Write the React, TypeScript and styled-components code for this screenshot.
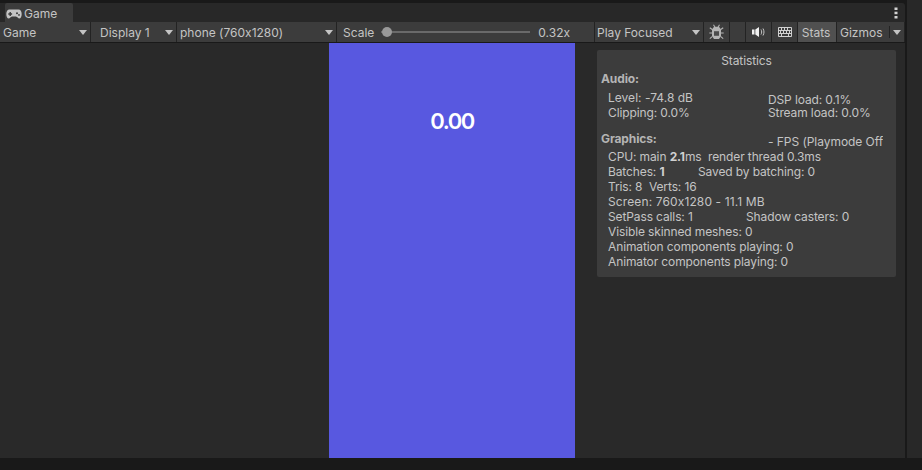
import React from "react";
import styled, { createGlobalStyle } from "styled-components";

const Global = createGlobalStyle`
  html, body { margin: 0; padding: 0; background: #191919; }
  body { width: 922px; height: 470px; overflow: hidden; font-family: Inter, "Noto Sans", sans-serif; font-feature-settings: "calt" 0; }
`;

const Page = styled.div`
  width: 922px;
  height: 470px;
  padding-bottom: 12px;
  box-sizing: border-box;
  display: flex;
  background: #191919;
  font-size: 12px;
  color: #c4c4c4;
`;

const Panel = styled.div`
  width: 905px;
  flex: none;
  padding-top: 3px;
  box-sizing: border-box;
  display: flex;
  flex-direction: column;
`;

const SideStrip = styled.div`
  flex: 1;
  margin-left: 2px;
  background: #282828;
`;

const TabStrip = styled.div`
  height: 19px;
  flex: none;
  background: #282828;
  display: flex;
  align-items: flex-end;
  justify-content: space-between;
  padding-left: 5px;
  border-radius: 0 3px 0 0;
`;

const Tab = styled.div`
  width: 68px;
  height: 19px;
  padding: 2px 0 0 1px;
  box-sizing: border-box;
  background: #3c3c3c;
  display: flex;
  align-items: center;
  gap: 2px;
  font-size: 12px;
  border-radius: 2px 2px 0 0;
`;

const MoreMenu = styled.div`
  width: 19px;
  height: 19px;
  display: flex;
  align-items: center;
  justify-content: center;
`;

const Toolbar = styled.div`
  height: 20px;
  flex: none;
  display: flex;
  background: #3c3c3c;
  border-bottom: 1px solid #191919;
  box-sizing: content-box;
`;

const Cell = styled.div<{ $w: number; $on?: boolean; $pad?: number; $left?: number }>`
  width: ${(p) => p.$w}px;
  flex: none;
  box-sizing: border-box;
  height: 20px;
  padding: 0 ${(p) => p.$pad ?? 3}px 0 ${(p) => p.$left ?? p.$pad ?? 3}px;
  display: flex;
  align-items: center;
  justify-content: space-between;
  border-right: 1px solid #232323;
  background: ${(p) => (p.$on ? "#505050" : "#3c3c3c")};
  white-space: nowrap;
`;

const IconCell = styled(Cell)<{ $nudge?: number }>`
  justify-content: center;
  padding: 0 ${(p) => p.$nudge ?? 0}px 0 0;
`;

const Caret = styled.span`
  width: 0;
  height: 0;
  flex: none;
  border-left: 4px solid transparent;
  border-right: 4px solid transparent;
  border-top: 5px solid #c4c4c4;
`;

const DisplayLabel = styled.span`
  margin-left: 6px;
`;

const Slider = styled.div`
  width: 149px;
  height: 2px;
  background: #6a6a6a;
  position: relative;
  margin-left: 5px;
`;

const Thumb = styled.span`
  position: absolute;
  left: 1px;
  top: -4px;
  width: 10px;
  height: 10px;
  border-radius: 50%;
  background: #999;
`;

const ScaleValue = styled.span`
  margin-left: 6px;
  margin-right: 18px;
`;

const Divider = styled.span`
  width: 1px;
  height: 12px;
  background: #232323;
  margin-left: 3px;
`;

const View = styled.div`
  flex: 1;
  min-height: 0;
  position: relative;
  background: #292929;
  display: flex;
  justify-content: center;
  padding-right: 1px;
`;

const GameScreen = styled.div`
  width: 246px;
  background: #5858e0;
  display: flex;
  justify-content: center;
  padding-top: 65px;
  box-sizing: border-box;
`;

const Score = styled.div`
  font-size: 22px;
  line-height: 26px;
  font-weight: 600;
  letter-spacing: -1.5px;
  color: #fff;
  font-family: Inter, sans-serif;
`;

const Stats = styled.div`
  position: absolute;
  left: 597px;
  top: 7px;
  width: 299px;
  height: 227px;
  box-sizing: border-box;
  background: #3c3c3c;
  border-radius: 2px;
  padding: 3px 4px 0;
  line-height: 15px;
  overflow: hidden;
  letter-spacing: -0.12px;
`;

const Title = styled.div`
  text-align: center;
  height: 15px;
  margin-bottom: 3px;
`;

const Heading = styled.div`
  font-weight: 700;
  color: #b4b4b4;
`;

const TwoCols = styled.div`
  display: grid;
  grid-template-columns: 160px 1fr;
  padding: 4px 0 0 7px;
`;

const Col = styled.div<{ $top?: number }>`
  padding-top: ${(p) => p.$top ?? 0}px;
  line-height: ${(p) => (p.$top ? 13 : 15)}px;
`;

const LevelText = styled.div`
  letter-spacing: 0.02px;
`;

const GraphicsHead = styled.div`
  display: grid;
  grid-template-columns: 167px 115px;
  margin-top: 11px;
  height: 15px;
`;

const Fps = styled.div`
  height: 18px;
  box-sizing: border-box;
  padding-top: 3px;
  white-space: nowrap;
  overflow: hidden;
  letter-spacing: -0.05px;
`;

const Lines = styled.div`
  padding-left: 7px;
  margin-top: 3px;
`;

const Line = styled.div`
  height: 15px;
  white-space: pre;
  display: flex;
`;

const ScreenLine = styled(Line)`
  letter-spacing: 0.12px;
`;

const Second = styled.span<{ $x: number }>`
  position: absolute;
  left: ${(p) => p.$x}px;
`;

const Row = styled(Line)`
  position: relative;
`;

const Strong = styled.b`
  font-weight: 700;
  color: #d0d0d0;
`;

const GamepadIcon = () => (
  <svg width="16" height="10" viewBox="0 0 16 10">
    <path
      fillRule="evenodd"
      fill="#c4c4c4"
      d="M3.500.500h9c2 0 3.200 1.800 3.200 4.500s-1 4.500-2.400 4.500c-1.300 0-1.800-1.600-3.300-1.900H6c-1.500.300-2 1.900-3.300 1.900C1.300 9.500.300 7.700.300 5S1.500.500 3.500.500zM3.500 3v1.300H2.300v1.400h1.200V7h1.400V5.700h1.200V4.300H4.900V3zM11 3.200a1 1 0 1 0 0 2 1 1 0 0 0 0-2zM13 5a.9.9 0 1 0 0 1.800.9.9 0 0 0 0-1.800z"
    />
  </svg>
);

const DotsIcon = () => (
  <svg width="4" height="12" viewBox="0 0 4 12">
    <g fill="#d2d2d2">
      <rect x="0.5" y="0.5" width="3" height="2.500" />
      <rect x="0.500" y="4.700" width="3" height="2.500" />
      <rect x="0.500" y="9" width="3" height="2.500" />
    </g>
  </svg>
);

const BugIcon = () => (
  <svg width="15" height="16" viewBox="0 0 15 16">
    <g stroke="#b4b4b4" strokeWidth="1.100" fill="none">
      <path d="M4.500 .8l1.500 2.400M10.500 .8l-1.500 2.400M.8 3.800l2.800 2M14.200 3.800l-2.800 2M.3 9h2.800M14.700 9h-2.800M.8 14.600l2.700-2.200M14.200 14.600l-2.700-2.200" />
    </g>
    <path fill="#b4b4b4" fillRule="evenodd" d="M5 2.800h5l2 2.700v6.500L10 15H5l-2-3V5.500zM5 7.500v4h5v-4z" />
    <rect x="5" y="7.500" width="5" height="4" fill="#4c4c4c" />
  </svg>
);

const SoundIcon = () => (
  <svg width="13" height="10" viewBox="0 0 13 10">
    <path fill="#f0f0f0" d="M0 2.500h2.500v5H0zM3.300 2.500L7 0v10L3.300 7.500z" />
    <path fill="none" stroke="#c4c4c4" strokeWidth="1" d="M9 2.500c.9 1.500.9 3.500 0 5M11 1.500c1.300 2.200 1.300 4.800 0 7" />
  </svg>
);

const KeyboardIcon = () => (
  <svg width="14" height="10" viewBox="0 0 14 10">
    <path
      fill="none"
      stroke="#d0d0d0"
      strokeWidth="1"
      d="M.5.500h13v9H.5zM.5 3.500h13M.5 6.500h13M3.500.500v3M6.500.500v3M9.500.500v3M2.500 3.500v3M5.500 3.500v3M8.500 3.500v3M11.500 3.500v3M3.500 6.500v3M10.500 6.500v3"
    />
  </svg>
);

export default function App() {
  return (
    <Page>
      <Global />
      <Panel>
        <TabStrip>
          <Tab>
            <GamepadIcon />
            Game
          </Tab>
          <MoreMenu>
            <DotsIcon />
          </MoreMenu>
        </TabStrip>
        <Toolbar>
          <Cell $w={91}>
            <span>Game</span>
            <Caret />
          </Cell>
          <Cell $w={86}>
            <DisplayLabel>Display 1</DisplayLabel>
            <Caret />
          </Cell>
          <Cell $w={160}>
            <span>phone (760x1280)</span>
            <Caret />
          </Cell>
          <Cell $w={258} $pad={6}>
            <span>Scale</span>
            <Slider>
              <Thumb />
            </Slider>
            <ScaleValue>0.32x</ScaleValue>
          </Cell>
          <Cell $w={109} $left={2}>
            <span>Play Focused</span>
            <Caret />
          </Cell>
          <IconCell $w={26}>
            <BugIcon />
          </IconCell>
          <IconCell $w={16} />
          <IconCell $w={26}>
            <SoundIcon />
          </IconCell>
          <IconCell $w={26}>
            <KeyboardIcon />
          </IconCell>
          <IconCell $w={39} $on $nudge={2}>
            Stats
          </IconCell>
          <Cell $w={68}>
            <span>Gizmos</span>
            <Divider />
            <Caret />
          </Cell>
        </Toolbar>
        <View>
          <GameScreen>
            <Score>0.00</Score>
          </GameScreen>
          <Stats>
            <Title>Statistics</Title>
            <Heading>Audio:</Heading>
            <TwoCols>
              <Col>
                <LevelText>Level: -74.8 dB</LevelText>
                <div>Clipping: 0.0%</div>
              </Col>
              <Col $top={3}>
                <div>DSP load: 0.1%</div>
                <div>Stream load: 0.0%</div>
              </Col>
            </TwoCols>
            <GraphicsHead>
              <Heading>Graphics:</Heading>
              <Fps>- FPS (Playmode Off</Fps>
            </GraphicsHead>
            <Lines>
              <Line>
                CPU: main <Strong>2.1</Strong>ms  render thread 0.3ms
              </Line>
              <Row>
                Batches: <Strong>1</Strong>
                <Second $x={90}>Saved by batching: 0</Second>
              </Row>
              <Line>Tris: 8  Verts: 16</Line>
              <ScreenLine>Screen: 760x1280 - 11.1 MB</ScreenLine>
              <Row>
                SetPass calls: 1<Second $x={138}>Shadow casters: 0</Second>
              </Row>
              <Line>Visible skinned meshes: 0</Line>
              <Line>Animation components playing: 0</Line>
              <Line>Animator components playing: 0</Line>
            </Lines>
          </Stats>
        </View>
      </Panel>
      <SideStrip />
    </Page>
  );
}
